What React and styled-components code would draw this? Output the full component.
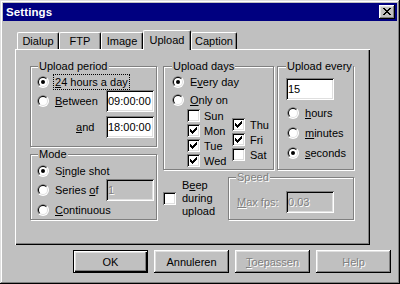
import React from 'react';
import styled, { createGlobalStyle } from 'styled-components';

const Global = createGlobalStyle`
  html, body { margin: 0; padding: 0; background: #c0c0c0; }
  body { font-family: "Liberation Sans", Arial, sans-serif; font-size: 11px; color: #000; }
  * { box-sizing: border-box; }
`;

const Window = styled.div`
  width: 400px;
  height: 284px;
  background: #c0c0c0;
  padding: 3px;
  box-shadow: inset -1px -1px #000, inset 1px 1px #dfdfdf, inset -2px -2px #808080, inset 2px 2px #fff;
  display: flex;
  flex-direction: column;
`;

const TitleBar = styled.div`
  flex: none;
  height: 18px;
  background: #000080;
  display: flex;
  align-items: center;
  justify-content: space-between;
  padding: 0 2px 0 3px;
`;

const Title = styled.span`
  color: #fff;
  font-weight: bold;
  font-size: 11.5px;
  letter-spacing: 0.1px;
`;

const CloseButton = styled.div`
  width: 16px;
  height: 14px;
  background: #c0c0c0;
  box-shadow: inset -1px -1px #000, inset 1px 1px #fff, inset -2px -2px #808080, inset 2px 2px #dfdfdf;
  display: flex;
  align-items: center;
  justify-content: center;
  padding: 0 1px 1px 0;
`;

const Body = styled.div`
  padding: 9px 0 0 12px;
  display: flex;
  flex-direction: column;
`;

const TabStrip = styled.div`
  height: 19px;
  display: flex;
  align-items: flex-end;
  padding-left: 2px;
`;

const Tab = styled.div`
  position: relative;
  z-index: ${p => (p.$active ? 1 : 0)};
  width: ${p => p.$w}px;
  height: ${p => (p.$active ? 20 : 17)}px;
  margin-bottom: ${p => (p.$active ? -1 : 0)}px;
  padding-bottom: ${p => (p.$active ? 2 : 0)}px;
  background: #c0c0c0;
  border-top: 1px solid #fff;
  border-left: 1px solid #fff;
  border-right: 1px solid #000;
  border-radius: 2px 2px 0 0;
  box-shadow: inset -1px 0 #808080;
  display: flex;
  align-items: center;
  justify-content: center;
`;

const Panel = styled.div`
  width: 355px;
  height: 196px;
  padding: 17px 0 0 15px;
  box-shadow: inset 1px 1px #fff, inset -1px -1px #000, inset -2px -2px #808080;
  display: flex;
`;

const LeftCol = styled.div`
  width: 127px;
  display: flex;
  flex-direction: column;
  gap: 7px;
`;

const RightArea = styled.div`
  width: 191px;
  margin-left: 6px;
  display: flex;
  flex-direction: column;
`;

const TopRow = styled.div`
  display: flex;
  gap: 3px;
`;

const BottomRow = styled.div`
  margin-top: 7px;
  display: flex;
  align-items: center;
`;

const Group = styled.div`
  flex: none;
  width: ${p => p.$w}px;
  height: ${p => p.$h}px;
  margin-left: ${p => p.$ml || '0'};
  padding: ${p => p.$pad};
  border: 1px solid #808080;
  box-shadow: inset 1px 1px #fff, 1px 1px #fff;
  display: flex;
  flex-direction: column;
`;

const Legend = styled.div`
  align-self: flex-start;
  height: 13px;
  line-height: 13px;
  margin: -7px 0 0 ${p => p.$ml}px;
  padding: 0 1px;
  background: #c0c0c0;
  white-space: nowrap;
  color: ${p => (p.$disabled ? '#808080' : '#000')};
  text-shadow: ${p => (p.$disabled ? '1px 1px 0 #fff' : 'none')};
`;

const Row = styled.div`
  flex: none;
  height: ${p => p.$h}px;
  margin-top: ${p => p.$mt || 0}px;
  margin-left: ${p => p.$ml || 0}px;
  display: flex;
  align-items: center;
  white-space: nowrap;
`;

const Label = styled.span`
  margin-left: 5px;
  padding: 0 1px;
  line-height: 14px;
  outline: ${p => (p.$focus ? '1px dotted #000' : 'none')};
`;

const Text = styled.span`
  margin-left: ${p => p.$ml || 0}px;
  color: ${p => (p.$disabled ? '#808080' : '#000')};
  text-shadow: ${p => (p.$disabled ? '1px 1px 0 #fff' : 'none')};
`;

const U = styled.span`
  text-decoration: underline;
  text-underline-offset: 1px;
`;

const Field = styled.div`
  flex: none;
  align-self: ${p => (p.$self ? p.$self : 'auto')};
  width: 48px;
  height: 22px;
  margin-left: ${p => p.$ml || '0'};
  margin-top: ${p => p.$mt || 0}px;
  padding: 0 2px;
  background: ${p => (p.$disabled ? '#c0c0c0' : '#fff')};
  color: ${p => (p.$disabled ? '#808080' : '#000')};
  text-shadow: ${p => (p.$disabled ? '1px 1px 0 #fff' : 'none')};
  box-shadow: inset 1px 1px #808080, inset -1px -1px #fff, inset 2px 2px #000, inset -2px -2px #dfdfdf;
  display: flex;
  align-items: center;
  white-space: nowrap;
`;

const Days = styled.div`
  display: flex;
  margin-left: 15px;
`;

const DayCol = styled.div`
  width: ${p => (p.$w ? `${p.$w}px` : 'auto')};
  margin-top: ${p => p.$mt || 0}px;
  display: flex;
  flex-direction: column;
`;

const DayRow = styled.div`
  height: 15px;
  display: flex;
  align-items: center;
  gap: ${p => p.$gap}px;
`;

const Box = styled.span`
  flex: none;
  width: 13px;
  height: 13px;
  background: #fff;
  box-shadow: inset 1px 1px #808080, inset -1px -1px #fff, inset 2px 2px #000, inset -2px -2px #dfdfdf;
  display: inline-flex;
`;

const CheckRow = styled.div`
  display: flex;
  align-items: center;
  gap: 6px;
`;

const MultiLine = styled.span`
  line-height: 13px;
`;

const ButtonRow = styled.div`
  margin-top: 5px;
  padding-right: 6px;
  display: flex;
  justify-content: flex-end;
  gap: 6px;
`;

const Button = styled.button`
  width: 75px;
  height: 23px;
  padding: 0;
  border: none;
  font: inherit;
  background: #c0c0c0;
  color: ${p => (p.$disabled ? '#808080' : '#000')};
  text-shadow: ${p => (p.$disabled ? '1px 1px 0 #fff' : 'none')};
  box-shadow: ${p =>
    p.$default
      ? 'inset 0 0 0 1px #000, inset 2px 2px #fff, inset -2px -2px #000, inset -3px -3px #808080, inset 3px 3px #dfdfdf'
      : 'inset -1px -1px #000, inset 1px 1px #fff, inset -2px -2px #808080, inset 2px 2px #dfdfdf'};
`;

function RadioMark({ checked }) {
  return (
    <svg width="12" height="12" viewBox="0 0 12 12" style={{ flex: 'none' }}>
      <circle cx="6" cy="6" r="6" fill="#fff" />
      <path d="M1.757 10.243 A6 6 0 0 1 10.243 1.757 Z" fill="#808080" />
      <circle cx="6" cy="6" r="5" fill="#dfdfdf" />
      <path d="M2.464 9.536 A5 5 0 0 1 9.536 2.464 Z" fill="#000" />
      <circle cx="6" cy="6" r="4" fill="#fff" />
      {checked && <circle cx="6" cy="6" r="2" fill="#000" />}
    </svg>
  );
}

const checkCols = [[3, 5], [4, 6], [5, 7], [6, 6], [7, 5], [8, 4], [9, 3]];

function CheckBox({ checked }) {
  return (
    <Box>
      {checked && (
        <svg width="13" height="13" viewBox="0 0 13 13" shapeRendering="crispEdges">
          {checkCols.map(([x, y]) => (
            <rect key={x} x={x} y={y} width="1" height="3" fill="#000" />
          ))}
        </svg>
      )}
    </Box>
  );
}

const xRows = ['XX....XX', '.XX..XX.', '..XXXX..', '...XX...', '..XXXX..', '.XX..XX.', 'XX....XX'];

function CloseGlyph() {
  return (
    <svg width="8" height="7" viewBox="0 0 8 7" shapeRendering="crispEdges">
      {xRows.flatMap((row, y) =>
        row.split('').map((c, x) => (c === 'X' ? <rect key={`${x}-${y}`} x={x} y={y} width="1" height="1" fill="#000" /> : null))
      )}
    </svg>
  );
}

function Day({ label, checked, gap }) {
  return (
    <DayRow $gap={gap}>
      <CheckBox checked={checked} />
      <span>{label}</span>
    </DayRow>
  );
}

const tabs = [
  { label: 'Dialup', w: 42 },
  { label: 'FTP', w: 42 },
  { label: 'Image', w: 42 },
  { label: 'Upload', w: 48, active: true },
  { label: 'Caption', w: 46 },
];

export default function App() {
  return (
    <>
      <Global />
      <Window>
        <TitleBar>
          <Title>Settings</Title>
          <CloseButton>
            <CloseGlyph />
          </CloseButton>
        </TitleBar>
        <Body>
          <TabStrip>
            {tabs.map(t => (
              <Tab key={t.label} $w={t.w} $active={t.active}>
                {t.label}
              </Tab>
            ))}
          </TabStrip>
          <Panel>
            <LeftCol>
              <Group $w={127} $h={81} $pad="0 2px 0 6px">
                <Legend $ml={1}>Upload period</Legend>
                <Row $h={16} $mt={1}>
                  <RadioMark checked />
                  <Label $focus>
                    <U>2</U>4 hours a day
                  </Label>
                </Row>
                <Row $h={22}>
                  <RadioMark />
                  <Label>
                    <U>B</U>etween
                  </Label>
                  <Field $ml="auto">09:00:00</Field>
                </Row>
                <Row $h={22} $mt={4}>
                  <Text $ml={39}>
                    <U>a</U>nd
                  </Text>
                  <Field $ml="auto">18:00:00</Field>
                </Row>
              </Group>
              <Group $w={127} $h={66} $pad="0 2px 0 6px">
                <Legend $ml={1}>Mode</Legend>
                <Row $h={16} $mt={2}>
                  <RadioMark checked />
                  <Label>
                    S<U>i</U>ngle shot
                  </Label>
                </Row>
                <Row $h={22}>
                  <RadioMark />
                  <Label>
                    Series <U>o</U>f
                  </Label>
                  <Field $ml="auto" $disabled>
                    1
                  </Field>
                </Row>
                <Row $h={16} $mt={1}>
                  <RadioMark />
                  <Label>
                    <U>C</U>ontinuous
                  </Label>
                </Row>
              </Group>
            </LeftCol>
            <RightArea>
              <TopRow>
                <Group $w={111} $h={104} $pad="0 2px 0 8px">
                  <Legend $ml={0}>Upload days</Legend>
                  <Row $h={16} $mt={1}>
                    <RadioMark checked />
                    <Label>
                      E<U>v</U>ery day
                    </Label>
                  </Row>
                  <Row $h={16} $mt={2}>
                    <RadioMark />
                    <Label>
                      <U>O</U>nly on
                    </Label>
                  </Row>
                  <Days>
                    <DayCol $w={45}>
                      <Day label="Sun" gap={4} />
                      <Day label="Mon" gap={4} checked />
                      <Day label="Tue" gap={4} checked />
                      <Day label="Wed" gap={4} checked />
                    </DayCol>
                    <DayCol $mt={9}>
                      <Day label="Thu" gap={5} checked />
                      <Day label="Fri" gap={5} checked />
                      <Day label="Sat" gap={5} />
                    </DayCol>
                  </Days>
                </Group>
                <Group $w={77} $h={104} $pad="0 2px 0 8px">
                  <Legend $ml={0}>Upload every</Legend>
                  <Field $mt={5} $self="flex-start">
                    15
                  </Field>
                  <Row $h={16} $mt={5} $ml={1}>
                    <RadioMark />
                    <Label>
                      <U>h</U>ours
                    </Label>
                  </Row>
                  <Row $h={16} $mt={4} $ml={1}>
                    <RadioMark />
                    <Label>
                      <U>m</U>inutes
                    </Label>
                  </Row>
                  <Row $h={16} $mt={4} $ml={1}>
                    <RadioMark checked />
                    <Label>
                      <U>s</U>econds
                    </Label>
                  </Row>
                </Group>
              </TopRow>
              <BottomRow>
                <CheckRow>
                  <CheckBox />
                  <MultiLine>
                    B<U>e</U>ep
                    <br />
                    during
                    <br />
                    upload
                  </MultiLine>
                </CheckRow>
                <Group $w={126} $h={43} $ml="auto" $pad="0 19px 0 8px">
                  <Legend $ml={-1} $disabled>
                    Speed
                  </Legend>
                  <Row $h={22} $mt={7}>
                    <Text $disabled>
                      <U>M</U>ax fps:
                    </Text>
                    <Field $ml="auto" $disabled>
                      0.03
                    </Field>
                  </Row>
                </Group>
              </BottomRow>
            </RightArea>
          </Panel>
          <ButtonRow>
            <Button $default>OK</Button>
            <Button>Annuleren</Button>
            <Button $disabled>
              <U>T</U>oepassen
            </Button>
            <Button $disabled>Help</Button>
          </ButtonRow>
        </Body>
      </Window>
    </>
  );
}
